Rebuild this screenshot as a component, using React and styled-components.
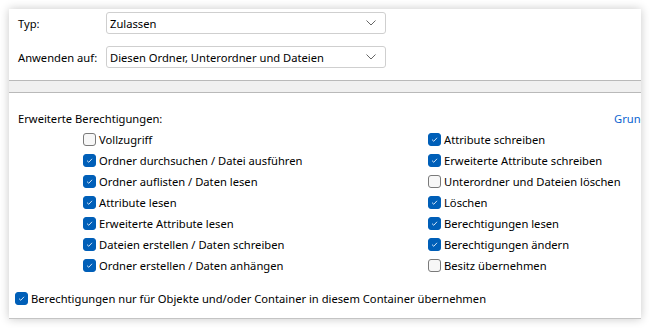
import React from "react";
import styled, { createGlobalStyle } from "styled-components";

const Global = createGlobalStyle`
  html, body {
    margin: 0;
    background: #ffffff;
  }
  body {
    font-family: "Noto Sans", "Open Sans", sans-serif;
    font-size: 11.2px;
    color: #000;
  }
`;

const Window = styled.div`
  margin: 9px;
  width: 632px;
  height: 309px;
  background: #fff;
  border-bottom: 1px solid #c4c4c4;
  box-shadow: 0 0 9px rgba(0, 0, 0, 0.22);
  overflow: hidden;
  display: flex;
  flex-direction: column;
`;

const Top = styled.div`
  padding: 3px 0 0 9px;
  height: 68px;
  display: flex;
  flex-direction: column;
  gap: 12px;
`;

const FieldRow = styled.div`
  display: flex;
  align-items: center;
  height: 22px;
`;

const Label = styled.div`
  width: 88px;
`;

const Select = styled.div`
  width: 266px;
  height: 20px;
  border: 1px solid #cfcfcf;
  border-radius: 3px;
  display: flex;
  align-items: center;
  justify-content: space-between;
  padding: 0 9px 0 3px;
  box-sizing: content-box;
`;

const Band = styled.div`
  height: 11px;
  background: #f0f0f0;
  border-top: 1px solid #b9b9b9;
  border-bottom: 1px solid #b9b9b9;
`;

const Lower = styled.div`
  padding-top: 17px;
  display: flex;
  flex-direction: column;
`;

const Header = styled.div`
  display: flex;
  justify-content: space-between;
  height: 16px;
  align-items: center;
  padding-left: 9px;
  white-space: nowrap;
`;

const Link = styled.span`
  color: #0a64d0;
  margin-right: -80px;
  width: 107px;
`;

const Columns = styled.div`
  display: grid;
  grid-template-columns: 345px auto;
  padding: 6px 0 0 74px;
`;

const Column = styled.div`
  display: flex;
  flex-direction: column;
  gap: 7px;
`;

const Item = styled.label`
  display: flex;
  align-items: center;
  gap: 3px;
  height: 14px;
  white-space: nowrap;
`;

const Box = styled.span`
  width: 13px;
  height: 13px;
  box-sizing: border-box;
  border-radius: 3px;
  flex: none;
  display: flex;
  align-items: center;
  justify-content: center;
  background: ${(p) => (p.$on ? "#005fb8" : "#f7f7f7")};
  border: 1px solid ${(p) => (p.$on ? "#005fb8" : "#7a7a7a")};
`;

const Footer = styled.div`
  padding: 19px 0 0 6px;
`;

function Check({ on, children }) {
  return (
    <Item>
      <Box $on={on}>
        {on && (
          <svg width="9" height="9" viewBox="0 0 9 9">
            <path d="M2 4.6 L3.8 6.3 L7 2.8" fill="none" stroke="#cfe3f7" strokeWidth="1" />
          </svg>
        )}
      </Box>
      {children}
    </Item>
  );
}

function Chevron() {
  return (
    <svg width="10" height="6" viewBox="0 0 10 6">
      <path d="M0.5 0.5 L5 5 L9.5 0.5" fill="none" stroke="#666" strokeWidth="1" />
    </svg>
  );
}

const left = [
  ["Vollzugriff", false],
  ["Ordner durchsuchen / Datei ausführen", true],
  ["Ordner auflisten / Daten lesen", true],
  ["Attribute lesen", true],
  ["Erweiterte Attribute lesen", true],
  ["Dateien erstellen / Daten schreiben", true],
  ["Ordner erstellen / Daten anhängen", true],
];

const right = [
  ["Attribute schreiben", true],
  ["Erweiterte Attribute schreiben", true],
  ["Unterordner und Dateien löschen", false],
  ["Löschen", true],
  ["Berechtigungen lesen", true],
  ["Berechtigungen ändern", true],
  ["Besitz übernehmen", false],
];

export default function App() {
  return (
    <>
      <Global />
      <Window>
        <Top>
          <FieldRow>
            <Label>Typ:</Label>
            <Select>
              <span>Zulassen</span>
              <Chevron />
            </Select>
          </FieldRow>
          <FieldRow>
            <Label>Anwenden auf:</Label>
            <Select>
              <span>Diesen Ordner, Unterordner und Dateien</span>
              <Chevron />
            </Select>
          </FieldRow>
        </Top>
        <Band />
        <Lower>
          <Header>
            <span>Erweiterte Berechtigungen:</span>
            <Link>Grundeinstellungen wiederherstellen</Link>
          </Header>
          <Columns>
            <Column>
              {left.map(([t, on]) => (
                <Check key={t} on={on}>{t}</Check>
              ))}
            </Column>
            <Column>
              {right.map(([t, on]) => (
                <Check key={t} on={on}>{t}</Check>
              ))}
            </Column>
          </Columns>
          <Footer>
            <Check on>Berechtigungen nur für Objekte und/oder Container in diesem Container übernehmen</Check>
          </Footer>
        </Lower>
      </Window>
    </>
  );
}
